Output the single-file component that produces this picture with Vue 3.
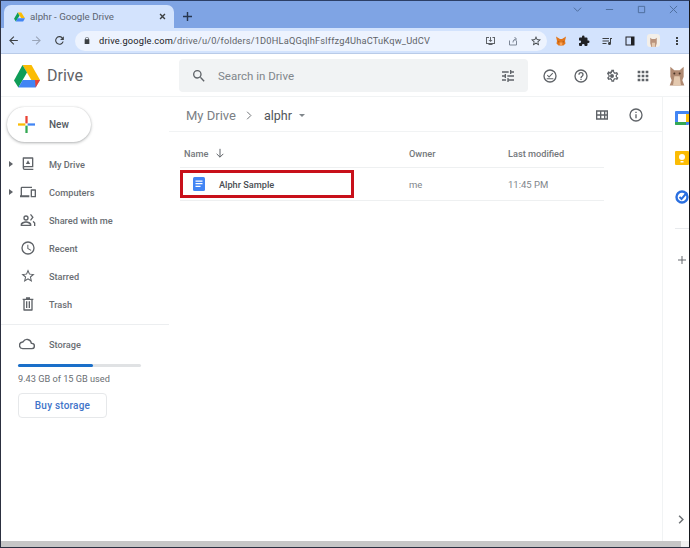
<script setup>
const navItems = [
  { label: 'My Drive', arrow: true, icon: 'M19 2H5a1 1 0 0 0-1 1v15a3 3 0 0 0 3 3h13v-2H7a1 1 0 0 1 0-2h13V3a1 1 0 0 0-1-1zm-1 13H6V4h12zM12 6.500l3.200 5.500H8.800z' },
  { label: 'Computers', arrow: true, icon: 'M3 6h15V4H3a2 2 0 0 0-2 2v11H0v3h14v-3H3zm20 2h-6a1 1 0 0 0-1 1v10a1 1 0 0 0 1 1h6a1 1 0 0 0 1-1V9a1 1 0 0 0-1-1zm-1 10h-4v-8h4z' },
  { label: 'Shared with me', arrow: false, icon: 'M9 5a4 4 0 1 0 0 8 4 4 0 0 0 0-8zm0 2a2 2 0 1 1 0 4 2 2 0 0 1 0-4zm0 7c-3 0-8 1.500-8 4.500V21h16v-2.500C17 15.500 12 14 9 14zm-6 5c.3-1 3.500-3 6-3s5.700 2 6 3zM15 4l3 4-3 4 1.500 1 4-5-4-5zm4 11 2 2v4h2v-5l-3-3z' },
  { label: 'Recent', arrow: false, icon: 'M12 2a10 10 0 1 0 0 20 10 10 0 0 0 0-20zm0 18a8 8 0 1 1 0-16 8 8 0 0 1 0 16zm.5-13H11v6l5.200 3.100.8-1.200-4.500-2.700z' },
  { label: 'Starred', arrow: false, icon: 'M22 9.200l-7.200-.6L12 2 9.200 8.600 2 9.200l5.500 4.700L5.800 21 12 17.300 18.200 21l-1.700-7.100zm-10 6-3.800 2.300 1-4.300-3.300-2.900 4.400-.4L12 5.900l1.700 4 4.400.4-3.300 2.900 1 4.300z' },
  { label: 'Trash', arrow: false, icon: 'M15 4V2H9v2H4v2h1v15a1 1 0 0 0 1 1h12a1 1 0 0 0 1-1V6h1V4zm2 16H7V6h10zM9 8h2v10H9zm4 0h2v10h-2z' }
]
</script>

<template>
  <div class="page">
    <div class="tabstrip">
      <div class="tab">
        <svg class="tab-logo" viewBox="0 0 24 22">
          <path fill="#fbbc04" d="M8 1h8l8 13h-8z" />
          <path fill="#0f9d58" d="M8 1 0 15l4 6 8-13z" />
          <path fill="#4285f4" d="M4 21h16l4-7H8z" />
        </svg>
        <span class="tab-title">alphr - Google Drive</span>
        <svg class="tab-close" viewBox="0 0 10 10"><path d="M1.500 1.500l7 7m0-7l-7 7" /></svg>
      </div>
      <svg class="tab-new" viewBox="0 0 10 10"><path d="M5 0v10M0 5h10" /></svg>
      <div class="win-btns">
        <svg viewBox="0 0 10 10"><path d="M1 3l4 4 4-4" /></svg>
        <svg viewBox="0 0 10 10"><path d="M1 5h8" /></svg>
        <svg viewBox="0 0 10 10"><path d="M1.500 1.500h7v7h-7z" /></svg>
        <svg viewBox="0 0 10 10"><path d="M1 1l8 8m0-8l-8 8" /></svg>
      </div>
    </div>

    <div class="toolbar">
      <svg class="tb-icon" viewBox="0 0 24 24"><path fill="#3c4043" d="M20 11H7.800l5.600-5.600L12 4l-8 8 8 8 1.400-1.400L7.800 13H20z" /></svg>
      <svg class="tb-icon" viewBox="0 0 24 24"><path fill="#9aa5b8" d="M4 11h12.200l-5.600-5.600L12 4l8 8-8 8-1.400-1.400 5.600-5.600H4z" /></svg>
      <svg class="tb-icon" viewBox="0 0 24 24"><path fill="#3c4043" d="M17.700 6.300A8 8 0 1 0 19.700 14h-2.100a6 6 0 1 1-1.300-6.300L13 11h7V4z" /></svg>
      <div class="omnibox">
        <svg class="lock" viewBox="0 0 10 12"><path fill="#3c4043" d="M8 4V3a3 3 0 0 0-6 0v1H1v8h8V4zM3 4V3a2 2 0 0 1 4 0v1z" /></svg>
        <span class="url"><span class="url-host">drive.google.com</span>/drive/u/0/folders/1D0HLaQGqlhFslffzg4UhaCTuKqw_UdCV</span>
        <svg class="omni-icon" viewBox="0 0 24 24"><path fill="#5f6368" d="M4 4h6v2H6v10h14V6h-3V4h5v14h-5v2h-8v-2H4zm8 0h2v6h3l-4 4-4-4h3z" /></svg>
        <svg class="omni-icon" viewBox="0 0 24 24"><path fill="none" stroke="#7d8796" stroke-width="2" d="M5 11v9h14v-9M12 15c0-5 3-7 6-7M15 4l4 4-4 4" /></svg>
        <svg class="omni-icon" viewBox="0 0 24 24"><path fill="#3c4043" d="M22 9.200l-7.200-.6L12 2 9.200 8.600 2 9.200l5.500 4.700L5.800 21 12 17.300 18.200 21l-1.700-7.100zm-10 6-3.800 2.300 1-4.300-3.300-2.900 4.400-.4L12 5.900l1.700 4 4.400.4-3.300 2.900 1 4.300z" /></svg>
      </div>
      <div class="ext-icons">
        <svg viewBox="0 0 24 24">
          <path fill="#e2761b" d="M2 3l8 5h4l8-5-2 9 1 5-4 4h-10l-4-4 1-5z" />
          <path fill="#f6a35c" d="M9 15h6l-1 6h-4z" />
          <path fill="#763d16" d="M7 12l2 2-2 1zm10 0-2 2 2 1z" />
        </svg>
        <svg viewBox="0 0 24 24"><path fill="#202124" d="M20.500 11H19V7a2 2 0 0 0-2-2h-4V3.500a2.500 2.500 0 0 0-5 0V5H4a2 2 0 0 0-2 2v3.800h1.500a2.700 2.700 0 0 1 0 5.400H2V20a2 2 0 0 0 2 2h3.800v-1.500a2.700 2.700 0 0 1 5.400 0V22H17a2 2 0 0 0 2-2v-4h1.500a2.500 2.500 0 0 0 0-5z" /></svg>
        <svg viewBox="0 0 24 24"><path fill="#3c4043" d="M3 6h13v2H3zm0 5h13v2H3zm0 5h8v2H3zm15-10h4v2h-2v9a3 3 0 1 1-2-2.800z" /></svg>
        <svg viewBox="0 0 24 24"><path fill="#202124" d="M3 3h18v18H3zm2 2v14h9V5z" /></svg>
        <svg class="ext-avatar" viewBox="0 0 24 24">
          <rect width="24" height="24" fill="#f3efe9" />
          <path fill="#b9927a" d="M6 7l3 2h6l3-2v10l-2 7H8l-2-7z" />
          <path fill="#e4c9af" d="M9 16h6v8H9z" />
        </svg>
        <svg viewBox="0 0 24 24"><path fill="#3c4043" d="M10 4h4v4h-4zm0 6h4v4h-4zm0 6h4v4h-4z" /></svg>
      </div>
    </div>

    <header class="drive-header">
      <div class="brand">
        <svg class="drive-logo" viewBox="0 0 26 24">
          <path fill="#fbbc04" d="M8.500 1h9L26 16h-8.700z" />
          <path fill="#0f9d58" d="M8.500 1 0 16.500l4.400 7L13 8.500z" />
          <path fill="#4285f4" d="M4.400 23.500h17.200l4.400-7.500H8.700z" />
          <path fill="#ea4335" d="M21.600 23.500 26 16h-5z" />
        </svg>
        <span class="drive-name">Drive</span>
      </div>
      <div class="search">
        <svg class="search-icon" viewBox="0 0 24 24"><path fill="#5f6368" d="M15.500 14h-.79l-.28-.27A6.470 6.470 0 0 0 16 9.500 6.500 6.500 0 1 0 9.500 16c1.610 0 3.090-.59 4.230-1.570l.27.28v.79l5 4.990L20.490 19zm-6 0A4.500 4.500 0 1 1 14 9.500 4.490 4.490 0 0 1 9.500 14z" /></svg>
        <span class="search-text">Search in Drive</span>
        <svg class="search-icon" viewBox="0 0 24 24"><path fill="#5f6368" d="M3 17v2h6v-2zM3 5v2h10V5zm10 16v-2h8v-2h-8v-2h-2v6zM7 9v2H3v2h4v2h2V9zm14 4v-2H11v2zm-6-4h2V7h4V5h-4V3h-2z" /></svg>
      </div>
      <div class="header-actions">
        <svg viewBox="0 0 24 24"><path fill="#5f6368" d="M12 2a10 10 0 1 0 0 20 10 10 0 0 0 0-20zm0 18a8 8 0 1 1 0-16 8 8 0 0 1 0 16zM7 15.500h10V17H7zm8.600-8.200-5 5-2.100-2-1.100 1 3.200 3.200 6.100-6.100z" /></svg>
        <svg viewBox="0 0 24 24"><path fill="#5f6368" d="M11 18h2v-2h-2zm1-16a10 10 0 1 0 0 20 10 10 0 0 0 0-20zm0 18a8 8 0 1 1 0-16 8 8 0 0 1 0 16zm0-14a4 4 0 0 0-4 4h2a2 2 0 0 1 4 0c0 2-3 1.800-3 5h2c0-2.300 3-2.500 3-5a4 4 0 0 0-4-4z" /></svg>
        <svg viewBox="0 0 24 24"><path fill="#5f6368" d="M19.400 13c.1-.3.1-.7.1-1s0-.7-.1-1l2.100-1.600-2-3.500-2.500 1c-.5-.4-1.100-.7-1.700-1L15 2.500h-4L10.600 5c-.6.300-1.200.6-1.700 1l-2.500-1-2 3.500L6.600 11c-.1.300-.1.700-.1 1s0 .7.1 1l-2.100 1.600 2 3.500 2.500-1c.5.4 1.100.7 1.700 1l.4 2.400h4l.4-2.500c.6-.3 1.200-.6 1.700-1l2.500 1 2-3.500zM17.500 12l-.1 1.300 1.500 1.200-.8 1.300-1.800-.7-1.100.8-1.100.6-.3 1.900h-1.600l-.3-1.900-1.100-.6-1.100-.8-1.800.7-.8-1.300 1.500-1.200-.1-1.300.1-1.300-1.500-1.200.8-1.300 1.800.7 1.100-.8 1.100-.6.3-1.900h1.600l.3 1.900 1.100.6 1.100.8 1.800-.7.8 1.300-1.500 1.200zM12 9a3 3 0 1 0 0 6 3 3 0 0 0 0-6z" /></svg>
        <svg viewBox="0 0 24 24"><path fill="#5f6368" d="M4 4h4v4H4zm6 0h4v4h-4zm6 0h4v4h-4zM4 10h4v4H4zm6 0h4v4h-4zm6 0h4v4h-4zM4 16h4v4H4zm6 0h4v4h-4zm6 0h4v4h-4z" /></svg>
        <svg class="avatar" viewBox="0 0 24 30">
          <path fill="#b08a72" d="M2 2l6 5h8l6-5v15l-2 5 3 8H1l3-8-2-5z" />
          <path fill="#e4c9af" d="M8 16h8l2 14H6z" />
          <circle cx="8" cy="12" r="1.500" fill="#4b3526" />
          <circle cx="16" cy="12" r="1.500" fill="#4b3526" />
        </svg>
      </div>
    </header>

    <div class="body">
      <aside class="sidebar">
        <button class="new-btn">
          <svg class="new-plus" viewBox="0 0 18 18">
            <path fill="#ea4335" d="M7.800 0h2.400v7.800H7.800z" />
            <path fill="#4285f4" d="M10.200 7.800H18v2.400h-7.800z" />
            <path fill="#34a853" d="M7.800 10.200h2.400V18H7.800z" />
            <path fill="#fbbc04" d="M0 7.800h7.800v2.400H0z" />
          </svg>
          <span>New</span>
        </button>
        <nav class="nav">
          <div v-for="item in navItems" :key="item.label" class="nav-row">
            <span class="nav-arrow" :class="{ hidden: !item.arrow }"></span>
            <svg class="nav-icon" viewBox="0 0 24 24"><path fill="#5f6368" :d="item.icon" /></svg>
            <span class="nav-label">{{ item.label }}</span>
          </div>
        </nav>
        <div class="side-divider"></div>
        <div class="storage-row">
          <svg class="nav-icon" viewBox="0 0 24 24"><path fill="#5f6368" d="M19.400 10A7.500 7.500 0 0 0 5.400 8 6 6 0 0 0 6 20h13a5 5 0 0 0 .4-10zM19 18H6a4 4 0 0 1-.4-8l1.100-.1.500-.9a5.500 5.500 0 0 1 10.200 1.500l.3 1.500h1.300a3 3 0 0 1 0 6z" /></svg>
          <span class="nav-label">Storage</span>
        </div>
        <div class="storage-bar"><div class="storage-fill"></div></div>
        <div class="storage-used">9.43 GB of 15 GB used</div>
        <button class="buy-btn">Buy storage</button>
      </aside>

      <main class="content">
        <div class="crumbs">
          <span class="crumb-root">My Drive</span>
          <svg class="crumb-sep" viewBox="0 0 8 12"><path d="M1.500 1l5 5-5 5" /></svg>
          <span class="crumb-folder">alphr</span>
          <span class="crumb-caret"></span>
          <svg class="crumb-act grid" viewBox="0 0 24 24"><path fill="#5f6368" d="M3 5v14h18V5zm6 6H5V7h4zm6 0h-4V7h4zm4 0h-2V7h2zM9 17H5v-4h4zm6 0h-4v-4h4zm4 0h-2v-4h2z" /></svg>
          <svg class="crumb-act" viewBox="0 0 24 24"><path fill="#5f6368" d="M11 7h2v2h-2zm0 4h2v6h-2zm1-9a10 10 0 1 0 0 20 10 10 0 0 0 0-20zm0 18a8 8 0 1 1 0-16 8 8 0 0 1 0 16z" /></svg>
        </div>
        <div class="file-table">
          <div class="table-head">
            <div class="col-name head-name">
              <span>Name</span>
              <svg class="sort" viewBox="0 0 12 12"><path d="M6 1v10M2 7l4 4 4-4" /></svg>
            </div>
            <div class="col-owner">Owner</div>
            <div class="col-date">Last modified</div>
          </div>
          <div class="table-row">
            <div class="col-name file-cell">
              <svg class="doc-icon" viewBox="0 0 12 14">
                <rect width="12" height="14" rx="1.500" fill="#4285f4" />
                <path fill="#fff" d="M2.500 3.500h7v1.200h-7zm0 2.600h7v1.200h-7zm0 2.600h5v1.200h-5z" />
              </svg>
              <span class="file-name">Alphr Sample</span>
            </div>
            <div class="col-owner cell">me</div>
            <div class="col-date cell">11:45 PM</div>
          </div>
        </div>
      </main>

      <aside class="addons">
        <svg class="addon" viewBox="0 0 14 14">
          <rect width="14" height="14" rx="1" fill="#4285f4" />
          <path fill="#34a853" d="M0 11h11v3H1a1 1 0 0 1-1-1z" />
          <path fill="#fbbc04" d="M11 3h3v8h-3z" />
          <path fill="#fff" d="M3 3h8v8H3z" />
        </svg>
        <svg class="addon" viewBox="0 0 14 14">
          <rect width="14" height="14" rx="1" fill="#fbbc04" />
          <circle cx="7" cy="6" r="3" fill="#fff" />
          <path fill="#fff" d="M5.500 10h3v1.500h-3z" />
        </svg>
        <svg class="addon" viewBox="0 0 14 14">
          <circle cx="7" cy="7" r="5.500" fill="none" stroke="#2a6fe0" stroke-width="2.400" />
          <path fill="none" stroke="#2a6fe0" stroke-width="2" d="M4.500 7l2 2L12 2.500" />
        </svg>
        <div class="addon-divider"></div>
        <svg class="addon-plus" viewBox="0 0 10 10"><path d="M5 0v10M0 5h10" /></svg>
        <svg class="addon-chevron" viewBox="0 0 8 12"><path d="M1.500 1l5 5-5 5" /></svg>
      </aside>
    </div>

    <div class="h-scroll"><div class="h-thumb"></div></div>
  </div>
</template>

<style>
html, body {
  margin: 0;
  overflow: hidden;
}
</style>

<style scoped>
.page {
  width: 690px;
  height: 548px;
  box-sizing: border-box;
  border-left: 1px solid #2c3040;
  border-right: 1px solid #15171c;
  border-bottom: 1px solid #2c3040;
  border-top: 1px solid #2c3f66;
  display: flex;
  flex-direction: column;
  font-family: Roboto, "Liberation Sans", sans-serif;
  background: #fff;
  color: #5f6368;
  overflow: hidden;
}

/* browser chrome */
.tabstrip {
  height: 27px;
  flex: none;
  background: #7fa4e4;
  display: flex;
  align-items: flex-end;
  padding-left: 3px;
}
.tab {
  width: 170px;
  height: 23px;
  box-sizing: border-box;
  background: #d3e3fd;
  border-radius: 7px 7px 0 0;
  display: flex;
  align-items: center;
  padding: 0 8px 0 10px;
}
.tab-logo {
  width: 11px;
  height: 10px;
  margin-right: 5px;
  flex: none;
}
.tab-title {
  font-size: 9.700px;
  color: #5c6470;
  flex: 1;
  white-space: nowrap;
}
.tab-close {
  width: 7px;
  height: 7px;
  fill: none;
  stroke: #3c4043;
  stroke-width: 2;
}
.tab-new {
  width: 9px;
  height: 9px;
  margin: 0 0 7px 9px;
  fill: none;
  stroke: #27364f;
  stroke-width: 1.600;
}
.win-btns {
  margin-left: auto;
  align-self: flex-start;
  display: flex;
  gap: 23px;
  padding: 4px 11px 0 0;
}
.win-btns svg {
  width: 9px;
  height: 9px;
  fill: none;
  stroke: #4f6f9f;
  stroke-width: 1.100;
}

.toolbar {
  height: 26px;
  flex: none;
  background: #d3e3fd;
  border-bottom: 1px solid #b9cbe8;
  display: flex;
  align-items: center;
  padding-left: 6px;
  box-sizing: border-box;
}
.tb-icon {
  width: 13px;
  height: 13px;
  margin-right: 10px;
  flex: none;
}
.omnibox {
  width: 472px;
  height: 20px;
  margin-left: -1px;
  background: #edf3fe;
  border-radius: 10px;
  display: flex;
  align-items: center;
  padding: 0 5px 0 9px;
  box-sizing: border-box;
}
.lock {
  width: 6px;
  height: 7px;
  margin-right: 9px;
  flex: none;
}
.url {
  font-size: 9.250px;
  color: #5f6368;
  flex: 1;
  white-space: nowrap;
  letter-spacing: 0.020em;
}
.url-host {
  color: #202124;
}
.omni-icon {
  width: 12px;
  height: 12px;
  margin-left: 11px;
  flex: none;
}
.ext-icons {
  display: flex;
  align-items: center;
  gap: 11px;
  margin-left: 8px;
}
.ext-icons svg {
  width: 12px;
  height: 12px;
}
.ext-icons .ext-avatar {
  width: 13px;
  height: 13px;
  border-radius: 3px;
}

/* drive header */
.drive-header {
  height: 43px;
  flex: none;
  display: flex;
  align-items: center;
  border-bottom: 1px solid #f1f3f4;
  box-sizing: border-box;
  padding-top: 1px;
}
.brand {
  width: 178px;
  display: flex;
  align-items: center;
  padding-left: 13px;
  box-sizing: border-box;
}
.drive-logo {
  width: 26px;
  height: 24px;
}
.drive-name {
  margin-left: 7px;
  font-size: 16px;
  color: #5f6368;
}
.search {
  width: 349px;
  height: 33px;
  background: #f1f3f4;
  border-radius: 4px;
  display: flex;
  align-items: center;
  padding: 0 12px;
  box-sizing: border-box;
}
.search-icon {
  width: 16px;
  height: 16px;
  flex: none;
}
.search-text {
  margin-left: 11px;
  font-size: 11.500px;
  color: #80868b;
  flex: 1;
}
.header-actions {
  display: flex;
  align-items: center;
  gap: 15px;
  margin-left: 14px;
}
.header-actions svg {
  width: 16px;
  height: 16px;
}
.header-actions .avatar {
  width: 16px;
  height: 21px;
  margin-left: 3px;
}

.body {
  flex: 1;
  min-height: 0;
  display: flex;
}

/* sidebar */
.sidebar {
  width: 168px;
  flex: none;
  padding-top: 10px;
  box-sizing: border-box;
}
.new-btn {
  width: 84px;
  height: 35px;
  margin-left: 6px;
  border: none;
  border-radius: 18px;
  background: #fff;
  box-shadow: 0 1px 3px rgba(60, 64, 67, 0.4), 0 0 1px rgba(60, 64, 67, 0.2);
  display: flex;
  align-items: center;
  padding: 0 0 0 11px;
  font-family: inherit;
  font-size: 10px;
  font-weight: 500;
  color: #555a5f;
}
.new-plus {
  width: 17px;
  height: 17px;
  margin-right: 14px;
}
.nav {
  margin-top: 8px;
}
.nav-row {
  height: 28px;
  display: flex;
  align-items: center;
}
.nav-arrow {
  width: 0;
  height: 0;
  margin-left: 8px;
  border-left: 4px solid #5f6368;
  border-top: 3.500px solid transparent;
  border-bottom: 3.500px solid transparent;
}
.nav-arrow.hidden {
  visibility: hidden;
}
.nav-icon {
  width: 16px;
  height: 16px;
  margin-left: 7px;
  flex: none;
}
.nav-label {
  margin-left: 13px;
  font-size: 9.200px;
  font-weight: 500;
  color: #6a6e73;
}
.side-divider {
  height: 1px;
  background: #eceef0;
  margin-top: 6px;
}
.storage-row {
  display: flex;
  align-items: center;
  height: 16px;
  margin-top: 11px;
  padding-left: 11px;
}
.storage-row .nav-icon {
  margin-left: 7px;
}
.storage-row .nav-label {
  margin-left: 14px;
}
.storage-bar {
  width: 123px;
  height: 3px;
  margin: 12px 0 0 17px;
  background: #e0e2e4;
  border-radius: 2px;
}
.storage-fill {
  width: 61%;
  height: 100%;
  background: #1a6fc9;
  border-radius: 2px;
}
.storage-used {
  margin: 6px 0 0 17px;
  font-size: 9.200px;
  line-height: 12px;
  color: #6a6e73;
}
.buy-btn {
  display: block;
  width: 89px;
  height: 25px;
  margin: 8px 0 0 17px;
  background: #fff;
  border: 1px solid #e6e8ea;
  border-radius: 4px;
  font-family: inherit;
  font-size: 10px;
  font-weight: 500;
  color: #3f74c9;
  letter-spacing: 0.020em;
}

/* file list */
.content {
  width: 493px;
  flex: none;
  box-sizing: border-box;
  padding: 0 0 0 11px;
}
.crumbs {
  height: 35px;
  box-sizing: border-box;
  border-bottom: 1px solid #f1f3f4;
  display: flex;
  align-items: center;
  margin-left: -11px;
  padding: 2px 0 0 17px;
}
.crumb-root {
  font-size: 13px;
  color: #7b8085;
}
.crumb-sep {
  width: 6px;
  height: 9px;
  margin: 0 12px 0 10px;
  fill: none;
  stroke: #6d7175;
  stroke-width: 1.300;
}
.crumb-folder {
  font-size: 12.500px;
  color: #4f5357;
}
.crumb-caret {
  width: 0;
  height: 0;
  margin-left: 7px;
  border-top: 3.500px solid #80868b;
  border-left: 3.500px solid transparent;
  border-right: 3.500px solid transparent;
}
.crumb-act {
  width: 16px;
  height: 16px;
  margin-left: 18px;
}
.crumb-act.grid {
  margin-left: auto;
}
.crumbs .crumb-act:last-child {
  margin-right: 18px;
}
.file-table {
  width: 424px;
  margin-top: 14px;
}
.table-head {
  height: 14px;
  display: flex;
  align-items: center;
  font-size: 9.200px;
  font-weight: 500;
  color: #74787c;
}
.table-row {
  height: 34px;
  display: flex;
  align-items: center;
  border-top: 1px solid #eef0f1;
  border-bottom: 1px solid #eef0f1;
  box-sizing: border-box;
}
.table-head + .table-row {
  margin-top: 7px;
}
.col-name {
  width: 229px;
  flex: none;
}
.col-owner {
  width: 99px;
  flex: none;
}
.col-date {
  flex: 1;
}
.head-name {
  display: flex;
  align-items: center;
  padding-left: 4px;
  box-sizing: border-box;
}
.sort {
  width: 10px;
  height: 10px;
  margin-left: 7px;
  fill: none;
  stroke: #5f6368;
  stroke-width: 1.200;
}
.file-cell {
  width: 174px;
  height: 28px;
  margin-right: 55px;
  box-sizing: border-box;
  border: 3px solid #c8101a;
  display: flex;
  align-items: center;
  padding-left: 10px;
}
.doc-icon {
  width: 12px;
  height: 14px;
  flex: none;
}
.file-name {
  margin-left: 14px;
  font-size: 9.200px;
  font-weight: 500;
  color: #4a4e52;
}
.cell {
  font-size: 9.500px;
  color: #80868b;
}

/* add-ons panel */
.addons {
  flex: 1;
  border-left: 1px solid #f1f3f4;
  display: flex;
  flex-direction: column;
  align-items: flex-start;
  padding: 14px 0 0 12px;
  box-sizing: border-box;
  position: relative;
  overflow: hidden;
}
.addon {
  width: 14px;
  height: 14px;
  margin-bottom: 25.500px;
  flex: none;
}
.addon-divider {
  width: 16px;
  height: 1px;
  background: #e8eaed;
  margin: -2px 0 0 0;
}
.addon-plus {
  width: 8px;
  height: 8px;
  margin: 27px 0 0 3px;
  fill: none;
  stroke: #5f6368;
  stroke-width: 1.200;
}
.addon-chevron {
  position: absolute;
  right: 5px;
  bottom: 17px;
  width: 6px;
  height: 9px;
  fill: none;
  stroke: #6d7175;
  stroke-width: 2;
}

.h-scroll {
  height: 6px;
  flex: none;
  background: #f1f1f1;
}
.h-thumb {
  width: 680px;
  height: 100%;
  background: #c6c6c6;
}
</style>
